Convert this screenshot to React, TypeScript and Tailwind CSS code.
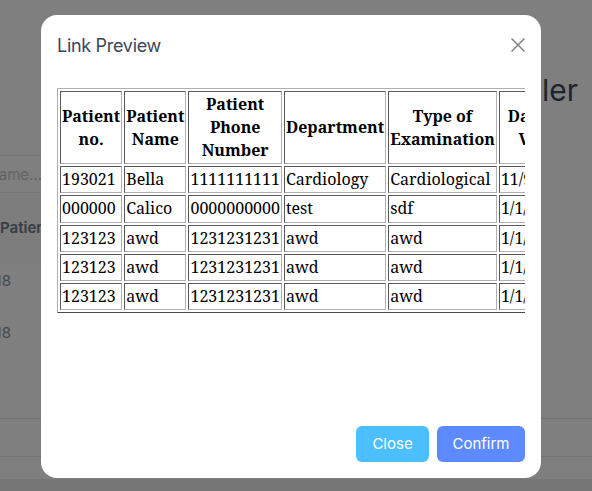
import React from "react";

const rows = [
  ["193021", "Bella", "1111111111", "Cardiology", "Cardiological", "11/9/2023", "10:00"],
  ["000000", "Calico", "0000000000", "test", "sdf", "1/1/2024", "09:00"],
  ["123123", "awd", "1231231231", "awd", "awd", "1/1/2024", "09:00"],
  ["123123", "awd", "1231231231", "awd", "awd", "1/1/2024", "09:00"],
  ["123123", "awd", "1231231231", "awd", "awd", "1/1/2024", "09:00"],
];

const headers = [
  "Patient no.",
  "Patient Name",
  "Patient Phone Number",
  "Department",
  "Type of Examination",
  "Date of Visit",
  "Time of Visit",
];

const cell =
  "border border-t-[#5a5a5a] border-l-[#5a5a5a] border-b-[#b0b0b0] border-r-[#b0b0b0] p-px";

export default function App() {
  return (
    <div className="relative w-[592px] h-[491px] overflow-hidden bg-white font-['Inter',sans-serif]">
      {/* background page */}
      <div className="flex flex-col h-full">
        <div className="h-[155px] flex justify-end items-start pt-[72px] pr-[14px]">
          <div className="text-[30px] text-[#3f4654] leading-[36px]">Scheduler</div>
        </div>
        <div className="h-[38px] border-t border-b border-[#e5e7eb] flex justify-end w-[42px] overflow-hidden">
          <div className="whitespace-nowrap text-[15px] text-[#c4c4c4] leading-[38px]">Search by name...</div>
        </div>
        <div className="h-[70px] bg-[#fbfbfb] flex items-center overflow-hidden w-[41px]">
          <div className="whitespace-nowrap text-[15px] font-semibold text-[#6b7a8c]">Patient</div>
        </div>
        <div className="h-[52px] flex items-start pt-[8px] justify-end w-[11px] overflow-hidden">
          <div className="whitespace-nowrap text-[15px] leading-[20px] text-[#8a939e]">2024-01-18</div>
        </div>
        <div className="h-[52px] flex items-start pt-[8px] justify-end w-[11px] overflow-hidden">
          <div className="whitespace-nowrap text-[15px] leading-[20px] text-[#8a939e]">2024-01-18</div>
        </div>
        <div className="h-[51px]" />
        <div className="h-[39px] border-t border-b border-[#e5e7eb]" />
        <div className="h-[22px]" />
        <div className="flex-1 bg-[#ececec]" />
      </div>

      {/* overlay */}
      <div className="absolute inset-0 bg-black/50" />

      {/* modal */}
      <div className="absolute left-[41px] top-[15px] w-[500px] h-[463px] bg-white rounded-2xl p-4 flex flex-col">
        <div className="h-[28px] flex items-center justify-between">
          <h2 className="text-[18px] text-[#3b4556] font-['Inter',sans-serif] tracking-[-0.3px]">Link Preview</h2>
          <svg width="14" height="14" viewBox="0 0 14 14">
            <path d="M0.5 0.5 L13.5 13.5 M13.5 0.5 L0.5 13.5" stroke="#7a7a7a" strokeWidth="1.4" fill="none" />
          </svg>
        </div>
        <div className="mt-[29px] flex-1 overflow-hidden">
          <table className="border-separate border-spacing-[2px] border border-t-[#b0b0b0] border-l-[#b0b0b0] border-b-[#4a4a4a] border-r-[#4a4a4a] text-[16px] leading-[23px] text-black font-['Noto_Serif','DejaVu_Serif',serif]">
            <thead>
              <tr>
                {headers.map((h) => (
                  <th key={h} className={`${cell} font-bold text-center align-middle`}>
                    {h}
                  </th>
                ))}
              </tr>
            </thead>
            <tbody>
              {rows.map((r, i) => (
                <tr key={i}>
                  {r.map((c, j) => (
                    <td key={j} className={`${cell} h-[27.3px] align-middle whitespace-nowrap`}>
                      {c}
                    </td>
                  ))}
                </tr>
              ))}
            </tbody>
          </table>
        </div>
        <div className="flex justify-end gap-2">
          <button className="w-[73px] h-[36px] rounded-md bg-[#4cbfff] text-white text-[15px]">Close</button>
          <button className="w-[88px] h-[36px] rounded-md bg-[#5d8bff] text-white text-[15px]">Confirm</button>
        </div>
      </div>
    </div>
  );
}
